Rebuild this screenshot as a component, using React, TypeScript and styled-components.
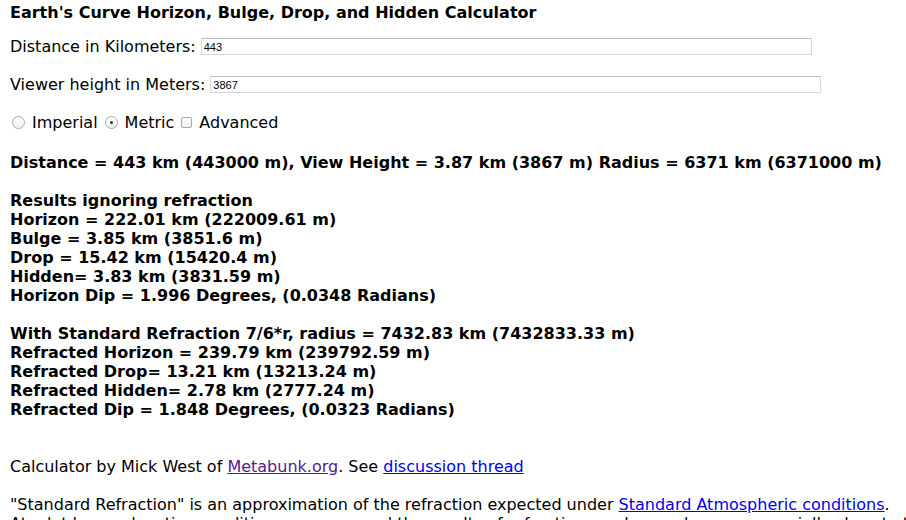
import React, { FC } from 'react';
import styled, { createGlobalStyle } from 'styled-components';

const GlobalStyle = createGlobalStyle`
  html, body {
    margin: 0;
    padding: 0;
    background: #ffffff;
  }

  body {
    font-family: "DejaVu Sans", Verdana, sans-serif;
    font-size: 16px;
    color: #000000;
  }
`;

const Page = styled.div`
  padding: 3px 10px 0;
  display: flex;
  flex-direction: column;
  line-height: 19px;
  overflow: hidden;
  height: 517px;
`;

const Title = styled.div`
  font-weight: bold;
`;

const Field = styled.label<{ $top: number }>`
  display: flex;
  align-items: center;
  height: 19px;
  margin-top: ${({ $top }) => $top}px;
  white-space: nowrap;
`;

const TextInput = styled.input`
  box-sizing: border-box;
  width: 611px;
  height: 17px;
  margin-left: 5px;
  padding: 0 2px;
  border: 1px solid #d6d6d6;
  border-top-color: #bdbdbd;
  font-family: "Liberation Sans", Arial, sans-serif;
  font-size: 11px;
  color: #000000;
  outline: none;
`;

const Options = styled.div`
  display: flex;
  align-items: center;
  height: 19px;
  margin-top: 19px;
  padding-left: 2px;
`;

const Option = styled.label`
  display: flex;
  align-items: center;
  gap: 7px;
  margin-right: 7px;
`;

const Radio = styled.span<{ $checked?: boolean }>`
  box-sizing: border-box;
  width: 13px;
  height: 13px;
  border-radius: 50%;
  border: 1px solid #a8a8a8;
  background: linear-gradient(#ffffff, #f2f2f2);
  display: flex;
  align-items: center;
  justify-content: center;

  &::after {
    content: '';
    display: ${({ $checked }) => ($checked ? 'block' : 'none')};
    width: 3px;
    height: 3px;
    border-radius: 50%;
    background: #333333;
  }
`;

const Check = styled.span`
  box-sizing: border-box;
  width: 11px;
  height: 11px;
  border-radius: 2px;
  border: 1px solid #a8a8a8;
  background: linear-gradient(#ffffff, #f2f2f2);
`;

const Block = styled.div<{ $top: number }>`
  margin-top: ${({ $top }) => $top}px;
  font-weight: bold;
  white-space: nowrap;
`;

const Para = styled.p<{ $top: number }>`
  margin: ${({ $top }) => $top}px 0 0;
  white-space: nowrap;
`;

const A = styled.a<{ $visited?: boolean }>`
  color: ${({ $visited }) => ($visited ? '#551a8b' : '#0000ee')};
  text-decoration: underline;
`;

const results = [
  'Horizon = 222.01 km (222009.61 m)',
  'Bulge = 3.85 km (3851.6 m)',
  'Drop = 15.42 km (15420.4 m)',
  'Hidden= 3.83 km (3831.59 m)',
  'Horizon Dip = 1.996 Degrees, (0.0348 Radians)',
];

const refracted = [
  'Refracted Horizon = 239.79 km (239792.59 m)',
  'Refracted Drop= 13.21 km (13213.24 m)',
  'Refracted Hidden= 2.78 km (2777.24 m)',
  'Refracted Dip = 1.848 Degrees, (0.0323 Radians)',
];

const App: FC = () => {
  return (
    <>
      <GlobalStyle />
      <Page>
        <Title>Earth's Curve Horizon, Bulge, Drop, and Hidden Calculator</Title>

        <Field $top={15}>
          Distance in Kilometers:
          <TextInput defaultValue="443" />
        </Field>
        <Field $top={19}>
          Viewer height in Meters:
          <TextInput defaultValue="3867" />
        </Field>

        <Options>
          <Option>
            <Radio />
            Imperial
          </Option>
          <Option>
            <Radio $checked />
            Metric
          </Option>
          <Option>
            <Check />
            Advanced
          </Option>
        </Options>

        <Block $top={21}>
          Distance = 443 km (443000 m), View Height = 3.87 km (3867 m) Radius = 6371 km (6371000 m)
        </Block>

        <Block $top={19}>
          <div>Results ignoring refraction</div>
          {results.map((line) => (
            <div key={line}>{line}</div>
          ))}
        </Block>

        <Block $top={19}>
          <div>With Standard Refraction 7/6*r, radius = 7432.83 km (7432833.33 m)</div>
          {refracted.map((line) => (
            <div key={line}>{line}</div>
          ))}
        </Block>

        <Para $top={38}>
          Calculator by Mick West of <A href="#" $visited>Metabunk.org</A>. See{' '}
          <A href="#">discussion thread</A>
        </Para>

        <Para $top={19}>
          "Standard Refraction" is an approximation of the refraction expected under{' '}
          <A href="#">Standard Atmospheric conditions</A>.
          <br />
          At a lot lower elevation conditions can vary and the results of refraction can be much more, especially close to the horizon.
        </Para>
      </Page>
    </>
  );
};

export default App;
